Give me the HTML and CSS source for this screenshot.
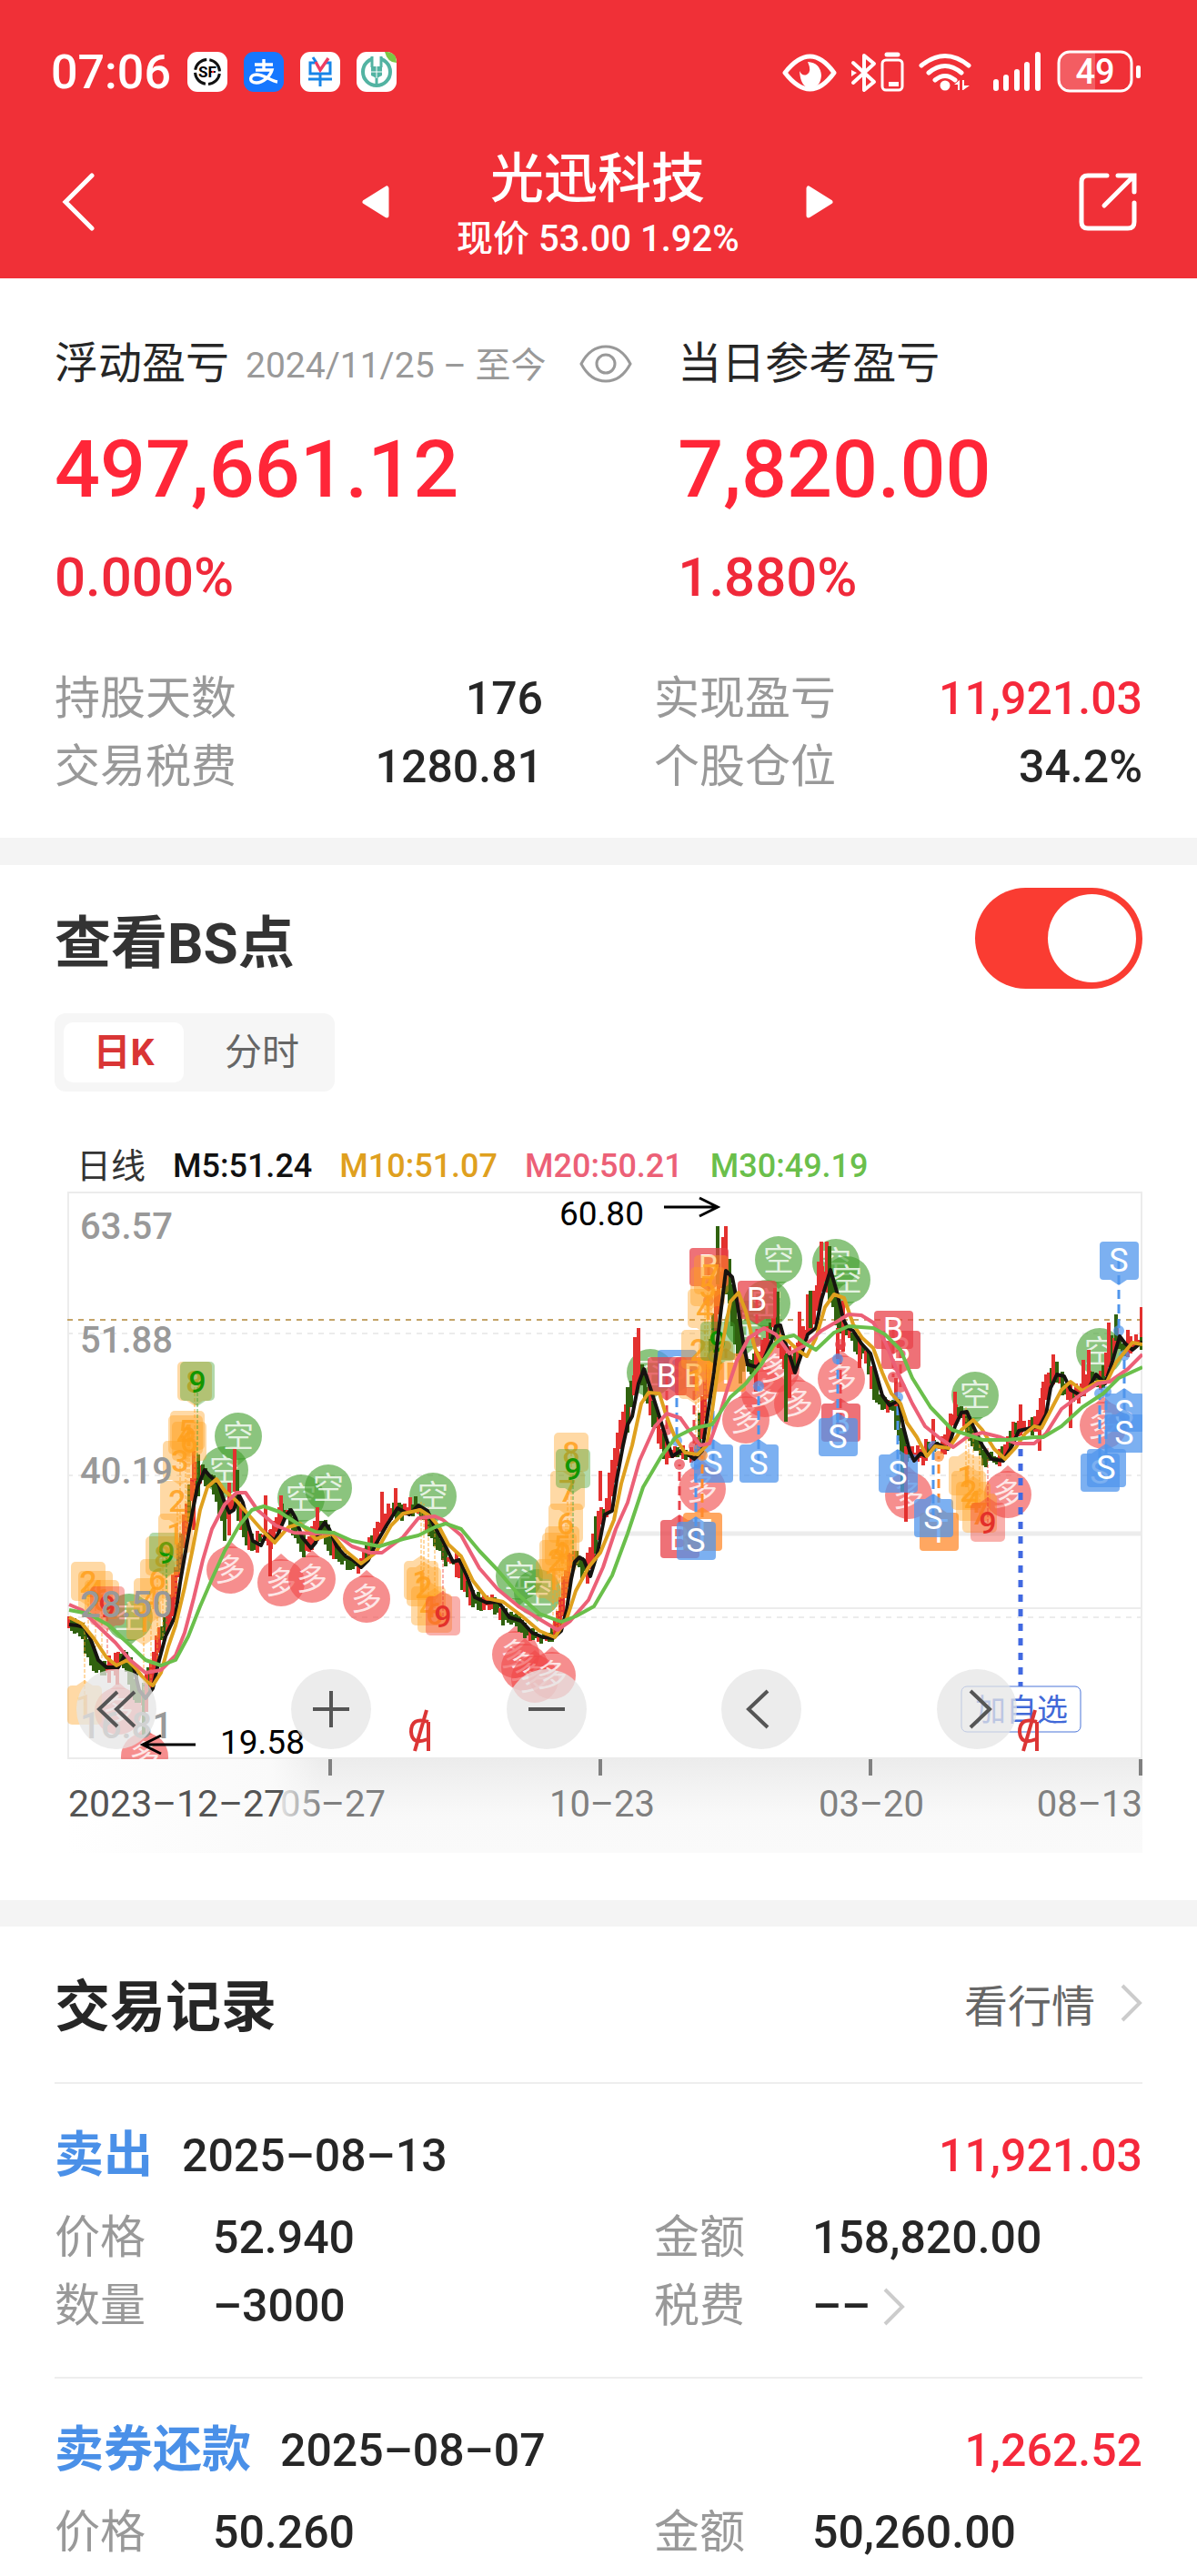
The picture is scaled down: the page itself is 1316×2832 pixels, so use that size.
FILE: index.html
```html
<!DOCTYPE html>
<html lang="zh-CN">
<head>
	<meta charset="UTF-8">
	<title>光迅科技</title>
	<link rel="stylesheet" href="styles.css">
</head>
<body>
	<header class="top">
		<div class="status">
			<span class="time">07:06</span>
			<svg class="app" viewBox="0 0 44 44">
				<rect width="44" height="44" rx="11" fill="#fff"/>
				<circle cx="22" cy="22" r="13.5" fill="none" stroke="#111" stroke-width="3" stroke-dasharray="18 3.2" stroke-dashoffset="-2"/>
				<text x="22" y="28" class="sf">SF</text>
				<circle cx="28" cy="22" r="1.3" fill="#e33"/>
			</svg>
			<svg class="app" viewBox="0 0 44 44">
				<rect width="44" height="44" rx="11" fill="#1677ff"/>
				<path d="M12 14H32M22 8V20M13 20H31C29 27 21 34 14 34C5 34 6 25 14 25C22 25 30 32 37 33" fill="none" stroke="#fff" stroke-width="3.4"/>
			</svg>
			<svg class="app" viewBox="0 0 44 44">
				<rect width="44" height="44" rx="11" fill="#fff"/>
				<path d="M16 12H11V24H33V12H28M22 24V38M9 30H35M14 6L18 12" fill="none" stroke="#1684e8" stroke-width="3"/>
				<path d="M17 11L22 20L31 7" fill="none" stroke="#ee3d62" stroke-width="3.4"/>
			</svg>
			<svg class="app" viewBox="0 0 44 44">
				<rect width="44" height="44" rx="11" fill="#fff"/>
				<path d="M31 0H34Q44 1 44 12Q34 12 31 0Z" fill="#7cc644"/>
				<circle cx="22" cy="22" r="15" fill="none" stroke="#52b3a2" stroke-width="4"/>
				<path d="M17 5H27V16H17Z" fill="#fff"/>
				<path d="M17 5V17M27 5V17M22 16V38" fill="none" stroke="#52b3a2" stroke-width="3"/>
				<path d="M16 16H28V26L22 29L16 26Z" fill="#52b3a2"/>
				<path d="M16 22H28M22 16V29" stroke="#fff" stroke-width="1"/>
			</svg>
			<svg class="phone" viewBox="0 0 396 48">
				<g fill="none" stroke="#fff" stroke-width="5" stroke-linejoin="round" stroke-linecap="round">
					<path d="M3 25Q31 -11 57 25Q31 61 3 25Z" stroke-width="5"/>
					<path d="M78 14L101 35L90 44V6L101 15L78 36" stroke-width="4"/>
					<rect x="110" y="11" width="22" height="33" rx="4" stroke-width="3"/>
					<path d="M115 5H127" stroke-width="5"/>
					<path d="M153 17Q179 -4 205 17M161 25Q179 10 197 25M168 33Q179 24 190 33" stroke-width="5"/>
					<path d="M235 35V42M246 30V42M258 24V42M269 16V42M281 5V42" stroke-width="6"/>
				</g>
				<path d="M28 13Q42 14 43 28Q42 41 31 42Q20 41 19 23Q22 29 27 27Q33 24 28 13Z" fill="#fff"/>
				<path d="M76 22L82 25L76 29Z" fill="#fff"/>
				<rect x="117" y="35" width="11" height="5" fill="#fff"/>
				<circle cx="179" cy="39" r="5.500" fill="#fff"/>
				<path d="M189 38L195 33V44H193V38ZM198 33H200V39H206L199 44H198Z" fill="#fff"/>
				<path d="M314 2H344V46H314Q304 45 304 34V14Q304 3 314 2Z" fill="#fff" fill-opacity=".22"/>
				<rect x="304" y="2" width="80" height="43" rx="12" fill="none" stroke="#fff" stroke-width="3"/>
				<rect x="389" y="17" width="5" height="14" rx="2" fill="#fff"/>
				<text x="344" y="37" class="power">49</text>
			</svg>
		</div>
		<nav class="bar">
			<button class="back" aria-label="返回"><svg viewBox="0 0 36 64"><path d="M33 3L4 32L33 61"/></svg></button>
			<div class="stock">
				<button class="turn" aria-label="上一只"><svg viewBox="0 0 30 36"><path d="M3 18L27 3V33Z"/></svg></button>
				<div class="name">
					<h1>光迅科技</h1>
					<p>现价 53.00 1.92%</p>
				</div>
				<button class="turn" aria-label="下一只"><svg viewBox="0 0 30 36"><path d="M27 18L3 3V33Z"/></svg></button>
			</div>
			<button class="share" aria-label="分享"><svg viewBox="0 0 64 64"><path d="M31 3H10Q3 3 3 10V54Q3 61 10 61H54Q61 61 61 54V33M43 3H61V21M60 4L28 36"/></svg></button>
		</nav>
	</header>

	<section class="profit">
		<div class="sum">
			<div>
				<h2>浮动盈亏 <small>2024/11/25 – 至今</small>
					<button class="eye" aria-label="隐藏金额"><svg viewBox="0 0 58 42"><path d="M2 21Q12 2 29 2T56 21Q46 40 29 40T2 21Z"/><circle cx="29" cy="21" r="10"/></svg></button>
				</h2>
				<p class="big">497,661.12</p>
				<p class="rate">0.000%</p>
			</div>
			<div>
				<h2>当日参考盈亏</h2>
				<p class="big">7,820.00</p>
				<p class="rate">1.880%</p>
			</div>
		</div>
		<dl class="stats">
			<div><dt>持股天数</dt><dd>176</dd></div>
			<div><dt>实现盈亏</dt><dd class="red">11,921.03</dd></div>
			<div><dt>交易税费</dt><dd>1280.81</dd></div>
			<div><dt>个股仓位</dt><dd>34.2%</dd></div>
		</dl>
	</section>

	<section class="points">
		<div class="points-head">
			<label for="bs">查看BS点</label>
			<input type="checkbox" id="bs" class="switch" checked>
		</div>
		<div class="tabs">
			<button class="selected">日K</button>
			<button>分时</button>
		</div>
		<div class="legend">
			<span>日线</span>
			<span class="m5">M5:51.24</span>
			<span class="m10">M10:51.07</span>
			<span class="m20">M20:50.21</span>
			<span class="m30">M30:49.19</span>
		</div>
		<div class="chart">
			<svg id="k" viewBox="0 0 1182 727">
				<defs>
					<linearGradient id="shade" x2="0" y2="1">
						<stop offset="0" stop-color="#ececec"/>
						<stop offset=".6" stop-color="#f9f9f9"/>
						<stop offset="1" stop-color="#fafafa"/>
					</linearGradient>
					<linearGradient id="fade">
						<stop offset="0" stop-color="#fff"/>
						<stop offset=".8" stop-color="#fafafa"/>
						<stop offset="1" stop-color="#fafafa" stop-opacity="0"/>
					</linearGradient>
					<clipPath id="plot"><rect width="1182" height="624"/></clipPath>
				</defs>
				<rect y="624" width="1182" height="103" fill="url(#shade)"/>
				<g class="grid">
					<rect x="1" y="1" width="1180" height="622"/>
					<path class="dash" d="M0 156H1182M0 312H1182M0 468H1182"/>
					<path d="M550 458H1182"/>
					<path class="thick" d="M586 376H1182"/>
					<path class="now" d="M0 141H1182"/>
				</g>
				<g id="plot-area" clip-path="url(#plot)"></g>
				<path class="add-line" d="M1048 283V544"/>
				<rect class="add-box" x="983" y="544" width="131" height="50" rx="6"/>
				<text class="add" x="1049" y="582">加自选</text>
				<g class="scale">
					<text x="14" y="52">63.57</text>
					<text x="14" y="177">51.88</text>
					<text x="14" y="321">40.19</text>
					<text x="14" y="468">28.50</text>
					<text x="14" y="601">16.81</text>
				</g>
				<g class="peak">
					<text x="168" y="618">19.58</text>
					<path d="M141 608H84M103 598L83 608L103 618"/>
					<text x="541" y="37">60.80</text>
					<path d="M656 17H714M695 7L715 17L695 27"/>
				</g>
				<g class="event">
					<path d="M397 583Q378 577 378 594Q379 609 396 602M397 583V615M395 570L382 615"/>
					<path d="M1066 583Q1047 577 1047 594Q1048 609 1065 602M1066 583V615M1064 570L1051 615"/>
				</g>
				<g class="days">
					<path d="M289 624V642M586 624V642M883 624V642M1180 624V642"/>
					<text x="292" y="687">05–27</text>
					<text x="588" y="687">10–23</text>
					<text x="884" y="687">03–20</text>
					<text x="1182" y="687" class="end">08–13</text>
				</g>
				<rect y="624" width="280" height="103" fill="url(#fade)"/>
				<text class="from" x="1" y="687">2023–12–27</text>
			</svg>
			<div class="tools">
				<button aria-label="最早"><svg viewBox="0 0 44 44"><path d="M23 3L3 22L23 41M42 3L22 22L42 41"/></svg></button>
				<button aria-label="放大"><svg viewBox="0 0 44 44"><path d="M2 22H42M22 2V42"/></svg></button>
				<button aria-label="缩小"><svg viewBox="0 0 44 44"><path d="M2 22H42"/></svg></button>
				<button aria-label="向前"><svg viewBox="0 0 44 44"><path d="M29 2L8 22L29 42"/></svg></button>
				<button aria-label="向后"><svg viewBox="0 0 44 44"><path d="M15 2L36 22L15 42"/></svg></button>
			</div>
		</div>
	</section>

	<section class="records">
		<div class="records-head">
			<h2>交易记录</h2>
			<a href="#">看行情 <svg class="more" viewBox="0 0 24 42"><path d="M2 2L21 21L2 40"/></svg></a>
		</div>
		<article>
			<h3><b>卖出</b> <time>2025–08–13</time> <span class="red">11,921.03</span></h3>
			<dl>
				<div><dt>价格</dt><dd>52.940</dd></div>
				<div><dt>金额</dt><dd>158,820.00</dd></div>
				<div><dt>数量</dt><dd>–3000</dd></div>
				<div><dt>税费</dt><dd>–– <svg class="more" viewBox="0 0 24 42"><path d="M2 2L21 21L2 40"/></svg></dd></div>
			</dl>
		</article>
		<article>
			<h3><b>卖券还款</b> <time>2025–08–07</time> <span class="red">1,262.52</span></h3>
			<dl>
				<div><dt>价格</dt><dd>50.260</dd></div>
				<div><dt>金额</dt><dd>50,260.00</dd></div>
			</dl>
		</article>
	</section>
	<script src="chart.js"></script>
</body>
</html>
```
FILE: styles.css
```css
*{
	box-sizing: border-box;
	margin:0;
	padding:0;
}
body{
	font-family: Roboto, "Noto Sans CJK SC", sans-serif;
	font-size:50px;
	color:#262626;
	background:#fff;
	overflow-x:hidden;
}
button{
	border:0;
	background:none;
	font:inherit;
	color:inherit;
	cursor:pointer;
}
svg{
	display:block;
}
h1, h2, h3{
	font-weight:400;
}
.red{
	color:#f5293b;
}

/* 顶部 */
.top{
	height:306px;
	background:#f03037;
	color:#fff;
}
.status{
	display:flex;
	align-items:center;
	gap:18px;
	height:158px;
	padding:0 60px 0 56px;
}
.time{
	font-size:52px;
	font-weight:500;
}
.app{
	width:44px;
	height:44px;
}
.sf{
	font-size:17px;
	font-weight:700;
	text-anchor:middle;
}
.phone{
	width:396px;
	height:48px;
	margin-left:auto;
}
.power{
	font-size:38px;
	font-weight:500;
	text-anchor:middle;
	fill:#fff;
}
.bar{
	display:flex;
	justify-content:space-between;
	align-items:center;
	height:128px;
	padding:0 66px 0 68px;
}
.back svg{
	width:36px;
	height:64px;
}
.share svg{
	width:64px;
	height:64px;
}
.bar path{
	fill:none;
	stroke:#fff;
	stroke-width:5;
	stroke-linecap:round;
}
.stock{
	display:flex;
	align-items:center;
	gap:74px;
	margin-left:24px;
}
.turn svg{
	width:30px;
	height:36px;
}
.turn path{
	fill:#fff;
	stroke-linejoin:round;
}
.name{
	text-align:center;
	width:310px;
	padding-top:6px;
	white-space:nowrap;
}
.name h1{
	font-size:59px;
	font-weight:500;
	line-height:76px;
}
.name p{
	font-size:40px;
	font-weight:500;
	line-height:56px;
}

/* 盈亏 */
.profit{
	padding:62px 60px 40px;
	border-bottom:30px solid #f4f4f4;
}
.sum{
	display:grid;
	grid-template-columns:573fr 427fr;
}
.sum h2{
	display:flex;
	align-items:center;
	gap:18px;
	font-size:48px;
	line-height:64px;
	white-space:nowrap;
}
.sum small{
	padding-top:4px;
	font-size:39px;
	line-height:60px;
	color:#999;
}
.eye{
	margin-left:18px;
}
.eye svg{
	width:58px;
	height:42px;
	fill:none;
	stroke:#999;
	stroke-width:3;
}
.big{
	margin-top:34px;
	font-size:88px;
	line-height:100px;
	font-weight:500;
	color:#ff2638;
}
.rate{
	margin-top:34px;
	font-size:60px;
	line-height:70px;
	font-weight:500;
	color:#f0293a;
}
.stats, .records dl{
	display:grid;
	grid-template-columns:1fr 1fr;
	column-gap:122px;
	line-height:75px;
}
.stats{
	margin-top:61px;
}
.stats div{
	display:flex;
	justify-content:space-between;
}
dt{
	color:#999;
}
dd{
	font-weight:500;
}

/* 查看BS点 */
.points{
	padding:25px 60px 52px;
	border-bottom:29px solid #f4f4f4;
}
.points-head{
	display:flex;
	justify-content:space-between;
	align-items:center;
	font-size:62px;
	font-weight:700;
	color:#333;
}
.switch{
	appearance:none;
	width:184px;
	height:111px;
	border-radius:56px;
	background:#ccc;
	padding:7px;
	cursor:pointer;
}
.switch::before{
	content:"";
	display:block;
	width:97px;
	height:97px;
	border-radius:50%;
	background:#fff;
}
.switch:checked{
	background:#fa3c32;
}
.switch:checked::before{
	margin-left:auto;
}
.tabs{
	display:inline-flex;
	margin-top:27px;
	padding:10px;
	height:86px;
	border-radius:12px;
	background:#f6f6f6;
	vertical-align:top;
}
.tabs button{
	width:132px;
	border-radius:10px;
	font-size:41px;
	line-height:66px;
	color:#666;
}
.tabs button + button{
	width:156px;
	padding-left:16px;
}
.tabs .selected{
	background:#fff;
	font-weight:700;
	color:#d93535;
}
.legend{
	display:flex;
	gap:30px;
	margin-top:58px;
	padding-left:24px;
	font-size:38px;
	line-height:48px;
	color:#333;
}
.legend .m5{
	color:#111;
}
.legend .m10{
	color:#dfa01e;
}
.legend .m20{
	color:#ec6077;
}
.legend .m30{
	color:#6abf4b;
}
.legend span + span{
	font-size:36px;
	font-weight:500;
}
.chart{
	position:relative;
	margin:4px 0 0 14px;
}
.chart > svg{
	width:100%;
	height:auto;
}
.tools{
	position:absolute;
	top:72.2%;
	left:0;
	right:0;
	display:grid;
	grid-template-columns:repeat(5, 1fr);
}
.tools button{
	display:flex;
	align-items:center;
	justify-content:center;
	width:88px;
	height:88px;
	margin-left:10px;
	border-radius:50%;
	background:rgba(230,230,230,0.75);
}
.tools svg{
	width:44px;
	height:44px;
	fill:none;
	stroke:#555;
	stroke-width:4;
}

/* K线图 */
.grid rect, .grid path{
	fill:none;
	stroke:#ececec;
	stroke-width:2;
}
.grid .dash{
	stroke-dasharray:6 6;
}
.grid .thick{
	stroke-width:5;
}
.grid .now{
	stroke:#c4a468;
	stroke-dasharray:6 6;
}
.ma{
	fill:none;
	stroke-width:4;
	stroke-linejoin:round;
}
.scale text{
	font-size:40px;
	font-weight:500;
	fill:#999;
}
.peak text{
	font-size:37px;
}
.peak path{
	fill:none;
	stroke:#000;
	stroke-width:3;
}
.add{
	font-size:34px;
	text-anchor:middle;
	fill:#4169d8;
}
.add-box{
	fill:#fff;
	fill-opacity:.5;
	stroke:#4a74d8;
}
.add-line{
	stroke:#4169e1;
	stroke-width:5;
	stroke-dasharray:8 8;
}
.event path{
	fill:none;
	stroke:#dc3535;
	stroke-width:4;
}
.days path{
	stroke:#808080;
	stroke-width:4;
}
.days text{
	font-size:40px;
	fill:#808080;
	text-anchor:middle;
}
.days .end{
	text-anchor:end;
}
.from{
	font-size:41px;
	fill:#555;
}
.pin text{
	text-anchor:middle;
}

/* 交易记录 */
.records{
	padding:0 60px;
}
.records-head{
	display:flex;
	justify-content:space-between;
	align-items:center;
	height:171px;
	padding-bottom:4px;
}
.records-head h2{
	font-size:61px;
	font-weight:700;
}
.records-head a{
	display:flex;
	align-items:center;
	gap:28px;
	font-size:48px;
	color:#666;
	text-decoration:none;
}
.more{
	width:24px;
	height:42px;
	fill:none;
	stroke:#ccc;
	stroke-width:4;
}
.records article{
	padding:42px 0 40px;
	border-top:2px solid #eee;
}
.records h3{
	display:flex;
	align-items:center;
	gap:32px;
	margin-bottom:16px;
	font-size:50px;
	line-height:74px;
	font-weight:500;
}
.records b{
	font-size:54px;
	color:#4a90e8;
}
.records h3 span{
	margin-left:auto;
}
.records dl div{
	display:flex;
}
.records dt{
	width:174px;
}
.records dd{
	display:flex;
	align-items:center;
	gap:14px;
}
```
FILE: chart.js
```js
var area = document.querySelector("#plot-area");
var ns = "http://www.w3.org/2000/svg";

var m5 = [2,476,11,477,19,479,26,493,34,515,43,523,56,523,64,508,73,523,79,548,86,557,94,546,101,515,108,489,119,466,124,430,132,384,138,350,143,325,151,306,156,312,166,321,173,342,178,353,183,350,189,334,193,342,199,367,204,384,213,389,219,376,228,384,234,371,241,355,246,350,251,359,258,380,268,392,273,386,278,371,283,364,288,371,296,390,306,401,314,405,323,413,331,405,339,388,351,367,363,348,376,355,386,345,396,351,403,367,413,384,424,407,431,405,439,422,448,446,461,452,474,451,486,468,499,472,511,485,523,490,534,491,543,483,549,460,554,426,558,407,563,402,568,405,575,423,583,397,591,355,599,351,604,317,611,279,616,256,621,247,628,211,634,195,641,216,649,241,658,270,665,291,676,284,689,294,698,285,704,245,711,199,718,136,724,87,731,94,736,119,743,165,748,190,758,193,766,184,774,165,779,148,784,147,789,165,796,186,800,199,806,182,814,157,823,150,829,119,839,86,846,110,853,140,858,150,864,153,873,167,883,178,889,199,896,224,904,235,914,230,919,258,926,285,931,296,938,288,944,291,956,277,968,283,976,258,983,243,989,242,996,258,1006,279,1016,294,1029,296,1039,279,1046,263,1059,260,1069,258,1076,245,1081,216,1088,201,1096,203,1103,218,1114,224,1123,216,1131,201,1141,211,1148,190,1157,159,1163,167,1171,174,1182,165];
var m10 = [2,468,16,475,29,491,43,512,54,521,66,515,76,525,86,538,94,543,103,529,111,500,119,477,129,435,138,392,146,350,154,325,164,316,173,329,186,340,199,355,213,371,228,386,243,369,256,365,273,382,291,376,306,395,323,409,339,397,356,367,369,354,388,350,399,357,409,369,419,388,433,401,446,428,461,447,479,451,499,466,519,483,536,490,549,470,559,439,573,413,586,397,601,361,609,321,621,279,631,233,639,221,651,222,658,245,668,270,679,287,693,289,703,279,709,241,716,190,723,153,729,121,738,111,746,132,756,172,763,188,773,176,783,159,789,161,803,174,813,181,823,161,833,127,843,113,854,117,864,146,874,161,886,172,896,199,906,222,916,233,923,254,934,270,945,291,954,280,969,282,983,262,996,251,1006,262,1019,283,1031,294,1043,281,1053,266,1063,258,1071,260,1083,237,1093,218,1103,209,1116,219,1133,209,1143,209,1153,188,1171,166,1182,168];
var m20 = [2,454,16,460,33,477,53,496,69,515,86,529,103,526,119,510,129,485,139,447,149,405,159,371,173,344,186,331,196,331,209,350,229,367,249,375,273,376,293,375,313,390,333,397,346,397,369,380,386,359,404,357,413,361,433,378,453,414,473,437,496,456,519,470,539,482,553,472,573,449,589,413,603,371,616,342,629,296,646,258,659,244,674,249,686,266,696,279,706,277,716,249,726,216,736,186,749,161,766,150,779,157,794,178,811,169,829,153,846,143,859,135,873,136,886,144,899,165,913,199,929,233,943,258,959,271,974,281,989,270,1006,265,1026,270,1043,277,1063,277,1076,266,1093,239,1113,224,1133,211,1146,209,1166,195,1182,179];
var m30 = [2,460,23,464,46,477,66,496,86,515,103,521,119,515,133,489,146,456,159,426,173,395,189,367,203,350,216,346,233,352,253,365,273,374,293,375,313,384,343,390,369,382,386,378,404,369,416,365,433,371,453,395,473,416,496,443,519,464,543,473,559,467,579,456,599,422,616,376,633,325,653,291,669,270,689,260,709,256,729,226,746,211,763,190,776,169,786,161,799,158,811,167,823,174,843,155,859,148,886,150,899,157,916,174,929,205,949,237,973,262,989,267,1006,273,1033,273,1063,270,1073,270,1093,258,1116,237,1139,222,1156,205,1182,193];

// x, top, bottom, r/g
var spikes = [
	[144,289,335,"g"],[139,285,372,"r"],[173,345,384,"g"],[178,320,378,"r"],[184,283,330,"r"],[187,306,340,"g"],
	[218,334,384,"r"],[223,372,423,"r"],[235,334,372,"r"],[275,347,384,"r"],[346,330,372,"r"],[361,326,352,"r"],
	[55,510,542,"r"],[46,510,540,"r"],[70,512,540,"g"],[76,530,562,"g"],[84,540,600,"g"],[87,530,572,"r"],
	[586,307,340,"r"],[602,294,320,"r"],[624,160,220,"r"],[628,150,205,"r"],[616,215,265,"g"],
	[715,38,102,"g"],[724,38,92,"r"],[721,50,94,"r"],[728,74,120,"g"],[740,130,211,"g"],[757,175,220,"r"],[778,106,150,"r"],
	[781,110,158,"g"],[790,180,253,"g"],[794,170,227,"r"],[805,132,174,"r"],[814,113,158,"r"],[817,109,150,"g"],
	[826,77,130,"r"],[829,55,110,"r"],[835,55,110,"r"],[838,60,120,"g"],[847,150,184,"r"],[853,120,176,"r"],
	[871,160,194,"r"],[911,205,236,"r"],[918,260,330,"g"],[922,280,363,"r"],[952,250,278,"r"],[976,220,256,"r"],
	[1048,234,268,"r"],[1069,250,285,"r"],[1072,216,256,"r"],[1084,179,212,"r"],[1088,187,210,"g"],[1103,208,260,"r"],
	[1117,185,220,"r"],[1123,174,210,"r"],[1145,144,188,"r"],[1153,135,164,"g"],[1166,152,182,"r"],[1181,127,160,"r"]
];

// 多空
var kong = [[68,468],[173,306],[188,269],[257,337],[287,326],[402,335],[497,423],[517,441],[641,199],[748,146],[769,123],[782,75],[845,78],[857,97],[998,224],[1135,176]];
var duo = [[56,571],[85,621],[179,416],[235,430],[269,426],[329,448],[493,509],[503,523],[514,536],[533,532],[698,327],[746,251],[767,222],[779,195],[803,233],[851,206],[925,334],[1034,333],[1139,257]];

// 九转: x, y, 数字, 方向
var nine = [
	[19,565,1,"o"],[23,429,2,"o"],[31,439,4,"o"],[38,449,6,"o"],[44,456,9,"r"],
	[84,472,1,"o"],[92,447,4,"o"],[99,426,6,"o"],[105,401,8,"o"],[109,397,9,"g"],
	[119,376,1,"o"],[121,340,2,"o"],[124,296,3,"o"],[130,268,4,"o"],[132,263,5,"o"],[134,275,6,"o"],[140,209,8,"o"],[143,209,9,"g"],
	[389,428,1,"o"],[392,435,2,"o"],[397,456,4,"o"],[404,464,6,"o"],[413,467,9,"r"],
	[534,426,1,"o"],[538,405,2,"o"],[541,397,4,"o"],[544,390,5,"o"],[548,365,6,"o"],[550,329,7,"o"],[554,287,8,"o"],[556,305,9,"g"],
	[691,207,1,"o"],[694,174,2,"o"],[701,129,4,"o"],[704,105,5,"o"],[708,92,7,"o"],[713,186,8,"o"],[715,165,9,"g"],
	[988,313,1,"o"],[991,329,2,"o"],[996,341,4,"o"],[1003,354,7,"o"],[1012,364,9,"r"]
];

// 买卖点: x, y, 类型, 连线终点
var bs = [
	[670,195,"S",274],[659,203,"B",262],[689,203,"B",280],[724,199,"T",170],[705,83,"B",120],[758,119,"B",165],
	[710,299,"S",180],[760,299,"S",214],[673,382,"B",300],[698,374,"T",290],[691,384,"S",300],
	[916,174,"B",215],[908,152,"B",204],[850,254,"B",168],[847,270,"S",184],[913,310,"S",226],[958,374,"T",291],[952,359,"S",280],
	[1156,76,"S",153],[1162,243,"S",180],[1162,266,"S",250],[1135,309,"S",222],[1142,304,"S",220]
];

var colors = {r:"#e3312f", g:"#30620f", o:"#ffa01e"};
var bsColors = {B:"#e8414a", S:"#5096ec", T:"#ff8a2c"};

init();

function add(parent, name, attrs, text){
	var el = document.createElementNS(ns, name);
	for(var key in attrs){
		el.setAttribute(key, attrs[key]);
	}
	if(text !== undefined){
		el.textContent = text;
	}
	parent.appendChild(el);
	return el;
}

function valueAt(line, x){
	for(var i=2; i<line.length; i+=2){
		if(x <= line[i]){
			var t = (x - line[i-2]) / (line[i] - line[i-2]);
			return line[i-1] + (line[i+1] - line[i-1]) * t;
		}
	}
	return line[line.length-1];
}

function bar(x, top, bottom, type){
	add(area, "rect", {x:x-2, y:top, width:4, height:bottom-top, fill:colors[type]});
}

function drawBars(){
	var seed = 7;
	function rnd(){
		seed = (seed * 16807) % 2147483647;
		return seed / 2147483647;
	}
	for(var x=2; x<1182; x+=3){
		var a = valueAt(m5, x+3);
		var b = valueAt(m5, x+8);
		var up = b < a;
		if(rnd() < 0.2){
			up = !up;
		}
		var top = Math.min(a, b) - rnd()*10;
		var bottom = Math.max(a, b) + rnd()*10;
		bar(x, Math.round(Math.max(top, 38)), Math.round(bottom), up ? "r" : "g");
	}
	spikes.forEach(function(s){
		bar(s[0], s[1], s[2], s[3]);
	});
}

function drawLine(points, color){
	add(area, "polyline", {"class":"ma", points:points.join(" "), stroke:color});
}

function drawRound(p, text, color, dir){
	var g = add(area, "g", {"class":"pin", transform:"translate(" + p[0] + " " + p[1] + ")"});
	add(g, "path", {d:"M-9 " + 24*dir + "L0 " + 32*dir + "L9 " + 24*dir + "Z", fill:color, "fill-opacity":.6});
	add(g, "circle", {r:26, fill:color, "fill-opacity":.62});
	add(g, "text", {y:12, "font-size":34, fill:"#fff", "fill-opacity":.8}, text);
}

function drawNine(n){
	var type = n[3];
	var color = type == "g" ? "#3f9f2b" : type == "r" ? "#f03a30" : colors.o;
	var below = (n[0] > 380 && n[0] < 420) || n[0] > 980 || n[1] > 560;
	add(area, "path", {d:"M" + n[0] + " " + n[1] + "V" + Math.round(valueAt(m5, n[0]) - 6), stroke:color, "stroke-dasharray":"4 2", "stroke-opacity":.8});
	var g = add(area, "g", {"class":"pin", transform:"translate(" + n[0] + " " + n[1] + ")"});
	add(g, "rect", {x:-19, y:-22, width:38, height:43, rx:5, fill:color, "fill-opacity":.4});
	add(g, "path", {d:below ? "M-9 -22L0 -28L9 -22Z" : "M-9 21L0 27L9 21Z", fill:color, "fill-opacity":.4});
	var ink = type == "g" ? "#129600" : type == "r" ? "#e3302a" : "#ff9f1c";
	add(g, "text", {y:12, "font-size":34, "font-weight":500, fill:ink, "fill-opacity":n[2] == 9 ? 1 : .85}, n[2]);
}

function drawBS(p){
	var color = bsColors[p[2]];
	add(area, "path", {d:"M" + p[0] + " " + p[1] + "V" + p[3], stroke:color, "stroke-width":3, "stroke-dasharray":"10 6"});
	add(area, "circle", {cx:p[0], cy:p[3], r:6, fill:color, "fill-opacity":.7});
	var g = add(area, "g", {"class":"pin", transform:"translate(" + p[0] + " " + p[1] + ")"});
	var dir = p[3] > p[1] ? 1 : -1;
	add(g, "rect", {x:-21, y:-21, width:43, height:42, rx:4, fill:color, "fill-opacity":.75});
	add(g, "path", {d:"M-9 " + 21*dir + "L0 " + 27*dir + "L9 " + 21*dir + "Z", fill:color, "fill-opacity":.75});
	add(g, "text", {y:12, "font-size":36, fill:"#fff"}, p[2]);
}

function init(){
	kong.forEach(function(p){
		drawRound(p, "空", "#43a02f", 1);
	});
	duo.forEach(function(p){
		drawRound(p, "多", "#f04848", -1);
	});
	drawBars();
	bs.forEach(drawBS);
	nine.forEach(drawNine);
	drawLine(m5, "#161310");
	drawLine(m10, "#dfa01e");
	drawLine(m20, "#ec6077");
	drawLine(m30, "#6abf4b");
}
```
